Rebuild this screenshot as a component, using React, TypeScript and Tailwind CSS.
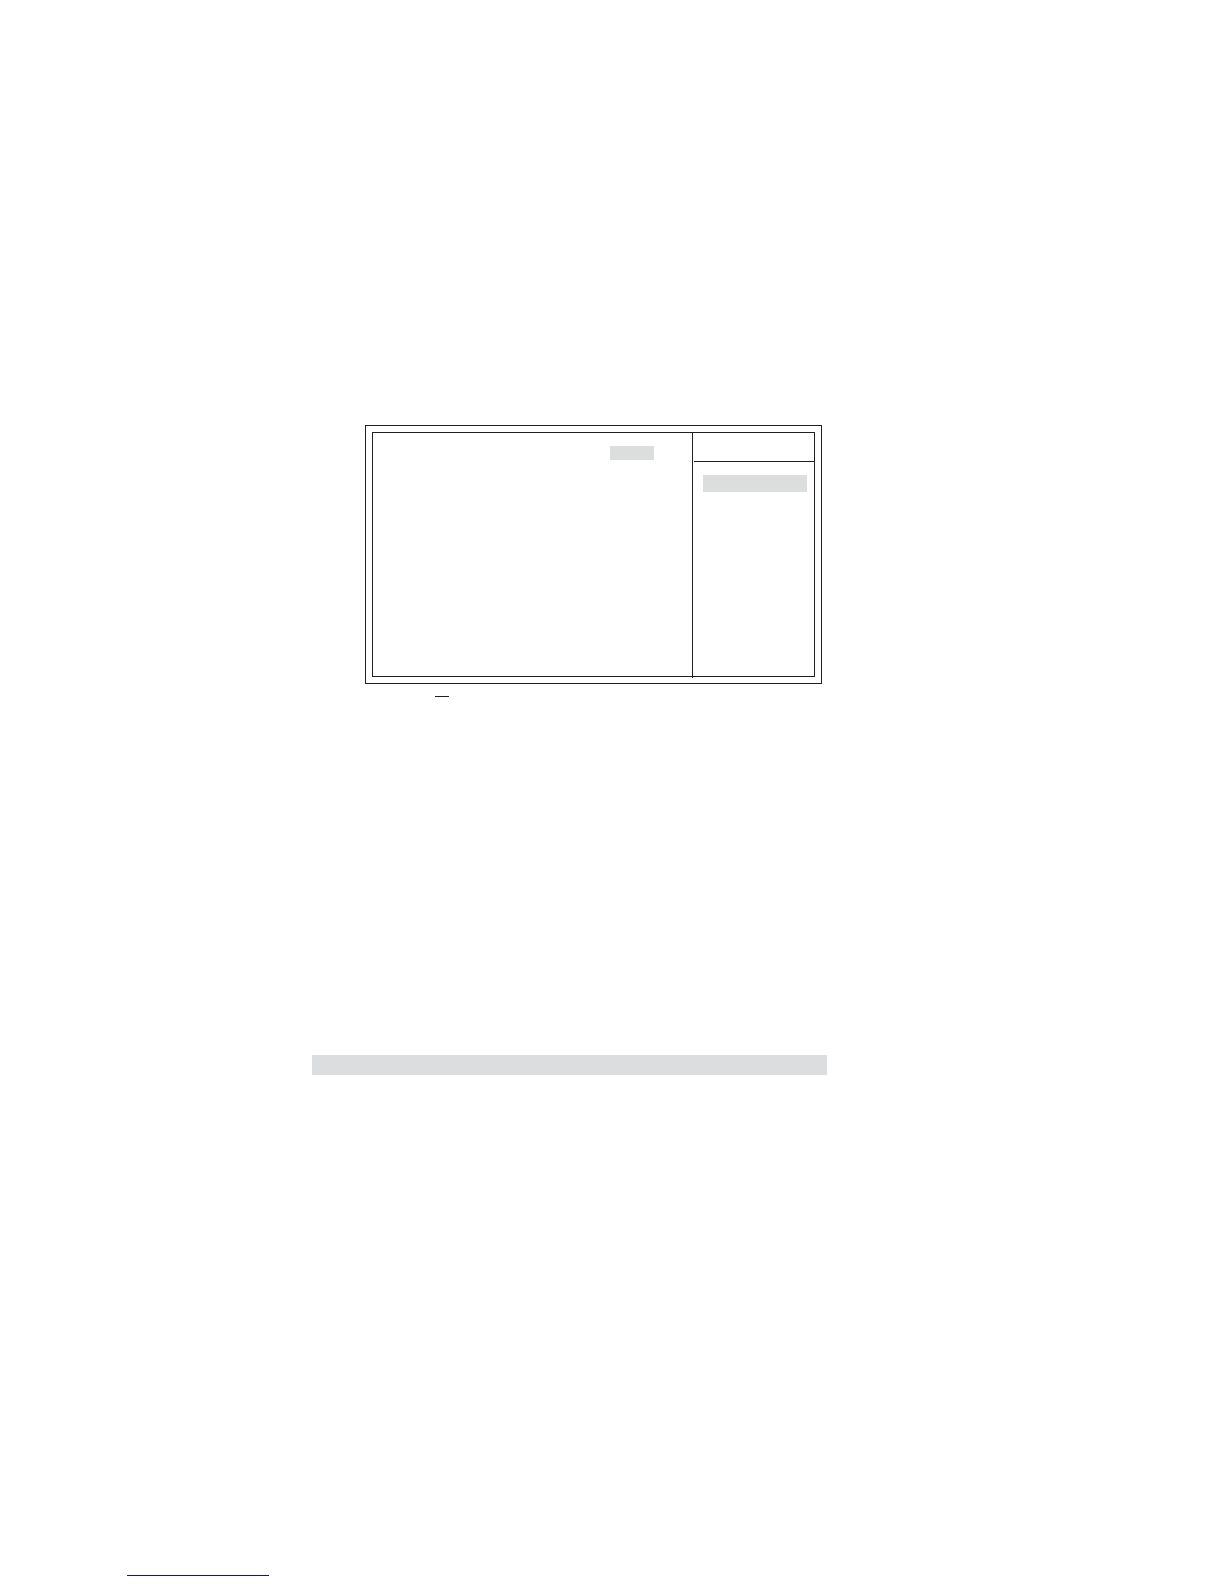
const SetupScreen = () => {
  return (
    <section className="ml-[53px] mr-[5px] border border-[#231f20] p-1.5">
      <div className="flex h-[245px] border border-[#231f20]">
        <div className="flex flex-1 justify-end pt-[13px] pr-[38px]">
          <div className="h-3.5 w-11 bg-[#dcdddd]" />
        </div>
        {/* divider runs slightly past the inner frame */}
        <aside className="-mb-0.5 w-[122px] border-l border-[#231f20]">
          <div className="ml-px h-[29px] border-b border-[#231f20]" />
          <div className="mt-[13px] mr-[7px] ml-2.5 h-[17px] bg-[#dcdddd]" />
        </aside>
      </div>
    </section>
  );
};

export default function App() {
  return (
    <div className="min-h-screen bg-white pt-[425px] font-['Liberation_Sans',sans-serif]">
      <main className="ml-[312px] max-w-[515px]">
        <SetupScreen />
        <hr className="mt-3 ml-[123px] w-3.5 border-t border-[#231f20]" />
        <div className="mt-[358px] h-5 bg-[#dcdddf]" />
      </main>
      <footer className="pt-[480px] pb-2 pl-[127px]">
        <a href="#" aria-label="Website" className="block h-[21px] w-[142px] border-b border-[#140fa0]" />
      </footer>
    </div>
  );
}
